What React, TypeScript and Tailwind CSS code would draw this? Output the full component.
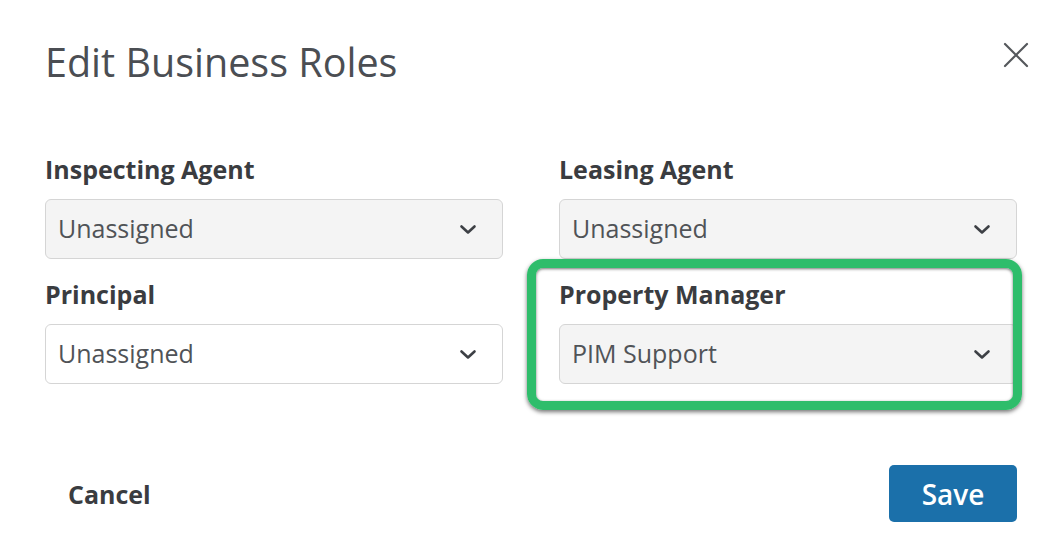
import React from "react";

const Chevron = () => (
  <svg width="18" height="11" viewBox="0 0 18 11" fill="none">
    <path d="M2.5 2.5L9 8.5L15.5 2.5" stroke="#3d4045" strokeWidth="2.6" strokeLinecap="round" strokeLinejoin="round" />
  </svg>
);

function Field({ label, value, white }: { label: string; value: string; white?: boolean }) {
  return (
    <div className="flex flex-col">
      <div className="text-[25px] leading-[24px] font-bold text-[#3a3c40] mb-[18px]">{label}</div>
      <div
        className={`h-[60px] rounded-[6px] border border-[#d5d5d5] flex items-center justify-between pl-[12px] pr-[25px] ${
          white ? "bg-white" : "bg-[#f4f4f4]"
        }`}
      >
        <span className="text-[25px] text-[#505357]">{value}</span>
        <Chevron />
      </div>
    </div>
  );
}

export default function App() {
  return (
    <div
      className="w-[1054px] h-[550px] bg-white flex flex-col pl-[46px] pr-[37px] pt-[42px]"
      style={{ fontFamily: '"Open Sans", sans-serif' }}
    >
      <div className="flex justify-between items-start">
        <h1 className="text-[39.5px] leading-[40px] text-[#4b4e53] font-normal -ml-[1px]">Edit Business Roles</h1>
        <svg width="26" height="26" viewBox="0 0 26 26" className="mt-[0px] mr-[-12px]" fill="none">
          <path d="M2 2L24 24M24 2L2 24" stroke="#55585c" strokeWidth="2.2" strokeLinecap="round" />
        </svg>
      </div>

      <div className="grid grid-cols-2 gap-x-[56px] gap-y-[23px] mt-[75px] -ml-[1px]">
        <Field label="Inspecting Agent" value="Unassigned" />
        <Field label="Leasing Agent" value="Unassigned" />
        <Field label="Principal" value="Unassigned" white />
        <div className="relative">
          <Field label="Property Manager" value="PIM Support" />
          <div className="absolute left-[-32px] top-[-23px] right-[-5px] bottom-[-26px] rounded-[16px] border-[9px] border-[#2ebd6b] shadow-[0_2px_4px_rgba(0,0,0,0.55),inset_0_1px_3px_rgba(0,0,0,0.55)] pointer-events-none" />
        </div>
      </div>

      <div className="flex justify-between items-center mt-[81px]">
        <button className="text-[25px] leading-[24px] font-bold text-[#3a3c40] ml-[22px]">Cancel</button>
        <button className="w-[128px] h-[57px] rounded-[5px] bg-[#1b70aa] text-white text-[28px] font-semibold">Save</button>
      </div>
    </div>
  );
}
